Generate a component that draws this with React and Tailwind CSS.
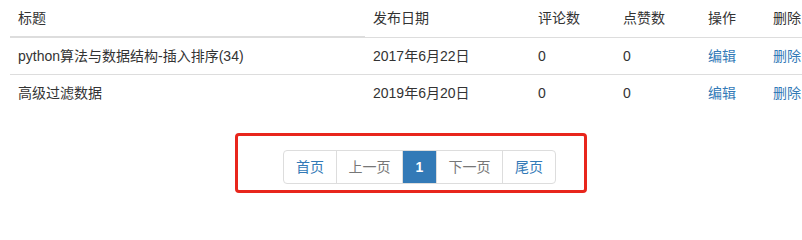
const rows = [
  { title: "python算法与数据结构-插入排序(34)", date: "2017年6月22日", comments: 0, likes: 0 },
  { title: "高级过滤数据", date: "2019年6月20日", comments: 0, likes: 0 },
];

const pages = [
  { label: "首页", w: "w-[54px]", cls: "text-[#337ab7] rounded-l-[4px]" },
  { label: "上一页", w: "w-[67px]", cls: "text-[#777]" },
  { label: "1", w: "w-[35px]", cls: "bg-[#337ab7] border-[#337ab7] text-white font-bold relative z-10" },
  { label: "下一页", w: "w-[67px]", cls: "text-[#777]" },
  { label: "尾页", w: "w-[54px]", cls: "text-[#337ab7] rounded-r-[4px]" },
];

export default function App() {
  return (
    <div
      className="w-[802px] h-[206px] overflow-hidden bg-white text-[14px] leading-[20px] text-[#333]"
      style={{ fontFamily: '"Liberation Sans", "Noto Sans CJK SC", sans-serif' }}
    >
      <table className="ml-[10px] w-[855px] table-fixed border-collapse">
        <colgroup>
          <col className="w-[355px]" />
          <col className="w-[165px]" />
          <col className="w-[85px]" />
          <col className="w-[85px]" />
          <col className="w-[65px]" />
          <col />
        </colgroup>
        <thead>
          <tr className="text-left">
            <th className="p-2 font-normal border-b-2 border-[#ddd]">标题</th>
            <th className="p-2 font-normal border-b border-[#ddd]">发布日期</th>
            <th className="p-2 font-normal border-b border-[#ddd]">评论数</th>
            <th className="p-2 font-normal border-b border-[#ddd]">点赞数</th>
            <th className="p-2 font-normal border-b border-[#ddd]">操作</th>
            <th className="p-2 font-normal border-b border-[#ddd]">删除</th>
          </tr>
        </thead>
        <tbody>
          {rows.map((r, i) => (
            <tr key={i} className={i > 0 ? "border-t border-[#ddd]" : ""}>
              <td className="p-2">{r.title}</td>
              <td className="p-2">{r.date}</td>
              <td className="p-2">{r.comments}</td>
              <td className="p-2">{r.likes}</td>
              <td className="p-2 text-[#337ab7]">编辑</td>
              <td className="p-2 text-[#337ab7]">删除</td>
            </tr>
          ))}
        </tbody>
      </table>

      <div className="ml-[235px] mt-[22px] w-[352px] h-[60px] border-[3px] border-[#e8261c] rounded-[4px] pl-[45px] pt-[14px]">
        <ul className="flex">
          {pages.map((p, i) => (
            <li
              key={p.label}
              className={`${p.w} h-[34px] flex items-center justify-center border border-[#ddd] ${i > 0 ? "-ml-px" : ""} ${p.cls}`}
            >
              {p.label}
            </li>
          ))}
        </ul>
      </div>
    </div>
  );
}
